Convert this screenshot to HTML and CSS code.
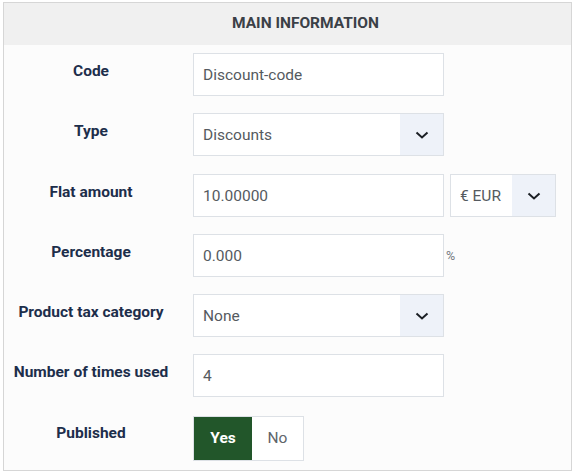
FILE: index.html
```html
<!DOCTYPE html>
<html>
<head>
<meta charset="utf-8">
<link rel="stylesheet" href="styles.css">
</head>
<body>
<div class="card">
  <div class="card-head">Main Information</div>
  <div class="card-body">
    <div class="row">
      <div class="label">Code</div>
      <div class="control"><div class="input">Discount-code</div></div>
    </div>
    <div class="row">
      <div class="label">Type</div>
      <div class="control">
        <div class="select"><span class="sel-text">Discounts</span><span class="sel-btn"><svg width="14" height="8" viewBox="0 0 14 8"><path d="M1.5 1.5 L7 6.5 L12.5 1.5" fill="none" stroke="#1b1f24" stroke-width="2"/></svg></span></div>
      </div>
    </div>
    <div class="row">
      <div class="label">Flat amount</div>
      <div class="control">
        <div class="input">10.00000</div>
        <div class="select currency"><span class="sel-text">€ EUR</span><span class="sel-btn"><svg width="14" height="8" viewBox="0 0 14 8"><path d="M1.5 1.5 L7 6.5 L12.5 1.5" fill="none" stroke="#1b1f24" stroke-width="2"/></svg></span></div>
      </div>
    </div>
    <div class="row">
      <div class="label">Percentage</div>
      <div class="control">
        <div class="input">0.000</div>
        <span class="unit">%</span>
      </div>
    </div>
    <div class="row">
      <div class="label">Product tax category</div>
      <div class="control">
        <div class="select"><span class="sel-text">None</span><span class="sel-btn"><svg width="14" height="8" viewBox="0 0 14 8"><path d="M1.5 1.5 L7 6.5 L12.5 1.5" fill="none" stroke="#1b1f24" stroke-width="2"/></svg></span></div>
      </div>
    </div>
    <div class="row">
      <div class="label">Number of times used</div>
      <div class="control"><div class="input">4</div></div>
    </div>
    <div class="row last">
      <div class="label">Published</div>
      <div class="control">
        <div class="toggle"><span class="opt yes">Yes</span><span class="opt no">No</span></div>
      </div>
    </div>
  </div>
</div>
</body>
</html>
```

FILE: styles.css
```css
* { box-sizing: border-box; }
html, body { margin: 0; padding: 0; background: #ffffff; }
body {
  padding: 2px 4px 0 3px;
  font-family: Roboto, "Liberation Sans", Arial, sans-serif;
}
.card {
  width: 569px;
  height: 469px;
  border: 1px solid #d6d6d6;
  background: #fcfcfc;
}
.card-head {
  height: 42px;
  background: #f0f0f0;
  text-align: center;
  text-transform: uppercase;
  font-weight: 700;
  font-size: 15.5px;
  line-height: 40px;
  padding-left: 36px;
  color: #3b4047;
}
.card-body {
  padding-top: 8px;
}
.row {
  display: flex;
  align-items: flex-start;
  height: 43px;
  margin-bottom: 17.3px;
}
.label {
  width: 174px;
  text-align: center;
  font-weight: 700;
  font-size: 15.5px;
  line-height: 20px;
  padding-top: 8px;
  color: #1d2e4b;
}
.control {
  margin-left: 15px;
  display: flex;
  align-items: flex-start;
}
.input {
  width: 251px;
  height: 43px;
  border: 1px solid #dde1e6;
  background: #ffffff;
  padding-left: 9px;
  font-size: 15.5px;
  line-height: 42px;
  color: #555a60;
}
.select {
  width: 251px;
  height: 43px;
  border: 1px solid #dde1e6;
  background: #ffffff;
  display: flex;
  font-size: 15.5px;
  color: #555a60;
}
.sel-text {
  flex: 1;
  padding-left: 9px;
  line-height: 42px;
}
.sel-btn {
  width: 43px;
  background: #eef2f9;
  display: flex;
  align-items: center;
  justify-content: center;
  padding-top: 1px;
}
.select.currency {
  width: 106px;
  margin-left: 6px;
}
.unit {
  margin-left: 2px;
  margin-top: 14px;
  font-size: 12.5px;
  color: #74797f;
}
.toggle {
  display: flex;
  margin-top: 1px;
  height: 45px;
  border: 1px solid #dde1e6;
  background: #ffffff;
}
.opt {
  display: flex;
  align-items: center;
  justify-content: center;
  font-size: 15.5px;
}
.opt.yes {
  width: 58px;
  background: #22562a;
  color: #ffffff;
  font-weight: 700;
}
.opt.no {
  width: 51px;
  color: #60656b;
}
```
